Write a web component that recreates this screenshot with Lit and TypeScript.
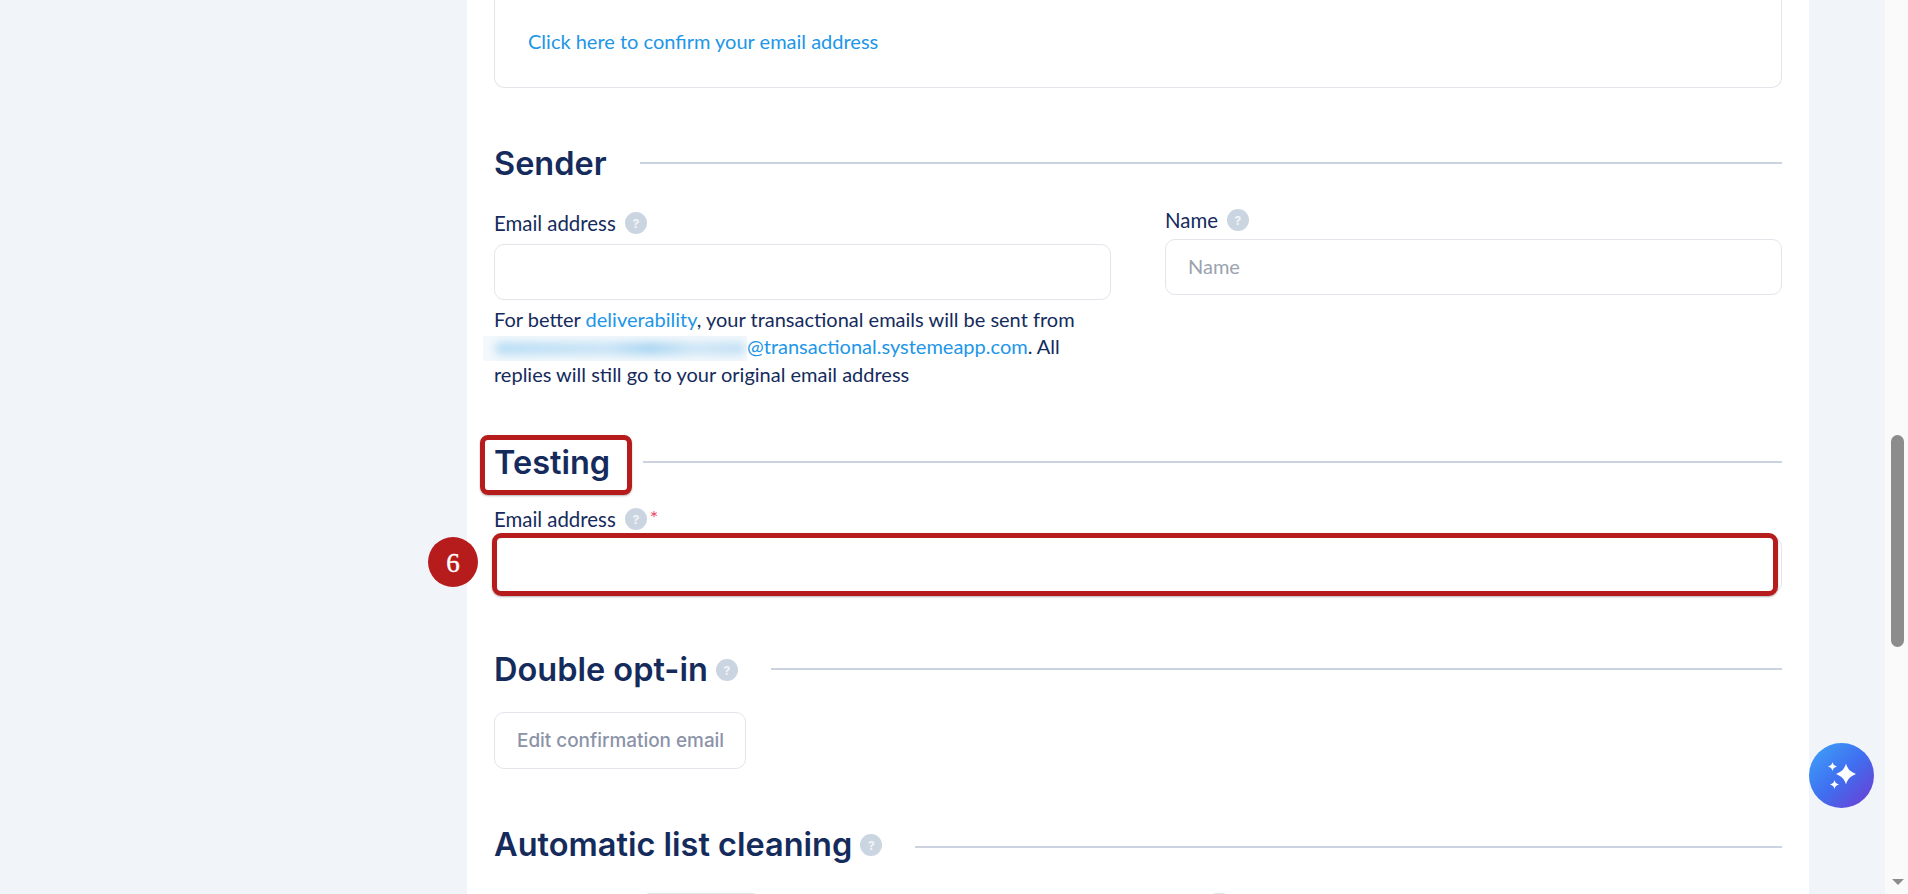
import { LitElement, html, css } from "lit";
import { customElement, property } from "lit/decorators.js";

@customElement("help-dot")
export class HelpDot extends LitElement {
  static styles = css`
    :host {
      display: inline-flex;
      align-items: center;
      justify-content: center;
      width: 22px;
      height: 22px;
      flex: none;
      border-radius: 50%;
      background: #cbd5e1;
      color: #f1f5f9;
      font: 700 12px "Inter", sans-serif;
    }
  `;
  render() { return html`?`; }
}

@customElement("section-title")
export class SectionTitle extends LitElement {
  static styles = css`
    :host { display: flex; align-items: center; }
    h2 {
      margin: var(--title-nudge, 0) 0 calc(-1 * var(--title-nudge, 0px));
      font: 600 32.5px/40px "Inter", sans-serif;
      color: #142b5c;
      white-space: nowrap;
    }
    help-dot { margin-left: 8px; }
    .rule {
      flex: 1;
      height: 2px;
      background: #cbd2e0;
      margin-left: 33px;
      margin-top: var(--rule-drop, 0);
    }
  `;
  @property() heading = "";
  @property({ type: Boolean }) help = false;

  render() {
    return html`
      <h2>${this.heading}</h2>
      ${this.help ? html`<help-dot></help-dot>` : ""}
      <div class="rule"></div>
    `;
  }
}

@customElement("app-root")
export class AppRoot extends LitElement {
  static styles = css`
    :host {
      display: block;
      height: 894px;
      overflow: hidden;
      position: relative;
      background: #f1f5f9;
      font-family: "Lato", "Noto Sans", sans-serif;
      color: #142b5c;
    }
    .page { display: flex; height: 894px; }
    .side { width: 467px; flex: none; }
    .main {
      width: 1342px;
      flex: none;
      box-sizing: border-box;
      background: #fff;
      padding: 0 27px;
      overflow: hidden;
    }
    .gutter { flex: 1; }

    .preview {
      height: 88px;
      box-sizing: border-box;
      border: 1px solid #e2e5ea;
      border-top: none;
      border-radius: 0 0 10px 10px;
      padding: 28px 33px 0;
      font-size: 20px;
      line-height: 27px;
    }
    a { color: #2196e8; text-decoration: none; }

    section-title.sender { margin-top: 55px; --title-nudge: 1px; }
    .cols { display: grid; grid-template-columns: 617px 617px; gap: 54px; margin-top: 27px; }
    .label { display: flex; align-items: center; gap: 9px; font-size: 20.4px; line-height: 26px; height: 26px; }
    .label.name { margin-top: -3px; margin-bottom: 6px; }
    .label .star { color: #f0476c; font-size: 20px; margin-left: -6px; margin-top: -4px; }
    .input {
      box-sizing: border-box;
      height: 56px;
      border: 1px solid #e2e5ea;
      border-radius: 10px;
      background: #fff;
      display: flex;
      align-items: center;
      padding: 0 22px 2px;
      font-size: 20px;
      color: #9aa3af;
      margin-top: 8px;
    }
    .label.name + .input { margin-top: 0; }
    .testing-field .input { margin-top: 5px; }
    .hint { margin: 6px 0 0; font-size: 20px; line-height: 27px; color: #142b5c; white-space: nowrap; }
    .blur {
      display: inline-block;
      width: 264px;
      height: 25px;
      margin-left: -11px;
      vertical-align: -7px;
      background: #f3f8fc;
      overflow: hidden;
    }
    .blur span {
      display: block;
      margin: 6px 0 0 12px;
      width: 250px;
      height: 13px;
      border-radius: 6px;
      background: linear-gradient(90deg, #b8ddf4 0%, #c8e3f6 45%, #a9d5f1 62%, #cfe6f6 80%, #c0dff4 100%);
      filter: blur(4px);
    }

    section-title.testing { margin-top: 54px; --title-nudge: 1px; }
    .testing-field { margin-top: 24px; }
    section-title.double { margin-top: 57px; --rule-drop: -2px; }
    .btn {
      display: inline-flex;
      align-items: center;
      box-sizing: border-box;
      height: 57px;
      padding: 0 21px 0 22px;
      margin-top: 22px;
      border: 1px solid #e2e5ea;
      border-radius: 10px;
      background: #fff;
      font: 500 18.9px "Inter", sans-serif;
      color: #8b93a8;
    }
    section-title.clean { margin-top: 56px; --rule-drop: 4px; }
    .cutoff { position: relative; height: 40px; margin-top: 28px; }
    .stub {
      position: absolute;
      top: 0;
      height: 40px;
      box-sizing: border-box;
      border: 1px solid #dfe3e6;
      border-radius: 10px;
    }

    .scrollbar {
      width: 23px;
      flex: none;
      background: #fafafa;
      display: flex;
      flex-direction: column;
      align-items: center;
      padding-left: 2px;
      box-sizing: border-box;
    }
    .thumb { width: 13px; height: 212px; margin-top: 435px; border-radius: 7px; background: #8c8c8c; }
    .arrow {
      margin-top: auto;
      margin-bottom: 9px;
      width: 0;
      height: 0;
      border-left: 6px solid transparent;
      border-right: 6px solid transparent;
      border-top: 6px solid #8c8c8c;
    }

    .ai {
      position: absolute;
      left: 1809px;
      top: 743px;
      width: 65px;
      height: 65px;
      border-radius: 50%;
      background: linear-gradient(135deg, #3f9ff8 5%, #3f6ff0 50%, #6b3fd4 95%);
      display: flex;
      align-items: center;
      justify-content: center;
    }

    .mark {
      position: absolute;
      box-sizing: border-box;
      border: 5px solid #b71c1c;
      border-radius: 8px;
      box-shadow: 0 1px 2px rgba(0, 0, 0, 0.3);
    }
    .mark.title { left: 480px; top: 435px; width: 152px; height: 60px; }
    .mark.field { left: 492px; top: 533px; width: 1286px; height: 63px; border-radius: 9px; }
    .badge {
      position: absolute;
      left: 428px;
      top: 537px;
      width: 50px;
      height: 50px;
      box-sizing: border-box;
      padding-top: 2px;
      border-radius: 50%;
      background: #b71c1c;
      color: #fff;
      display: flex;
      align-items: center;
      justify-content: center;
      font: 400 27px "Liberation Serif", serif;
      -webkit-text-stroke: 0.4px #fff;
    }
  `;

  render() {
    return html`
      <div class="page">
        <div class="side"></div>
        <main class="main">
          <div class="preview"><a>Click here to confirm your email address</a></div>

          <section-title class="sender" heading="Sender"></section-title>
          <div class="cols">
            <div>
              <div class="label">Email address <help-dot></help-dot></div>
              <div class="input"></div>
              <p class="hint">
                For better <a>deliverability</a>, your transactional emails will be sent from<br />
                <span class="blur"><span></span></span><a>@transactional.systemeapp.com</a>. All<br />
                replies will still go to your original email address
              </p>
            </div>
            <div>
              <div class="label name">Name <help-dot></help-dot></div>
              <div class="input">Name</div>
            </div>
          </div>

          <section-title class="testing" heading="Testing"></section-title>
          <div class="testing-field">
            <div class="label">Email address <help-dot></help-dot><span class="star">*</span></div>
            <div class="input"></div>
          </div>

          <section-title class="double" heading="Double opt-in" help></section-title>
          <div class="btn">Edit confirmation email</div>

          <section-title class="clean" heading="Automatic list cleaning" help></section-title>
          <div class="cutoff">
            <div class="stub" style="left:146px;width:122px"></div>
            <div class="stub" style="left:713px;width:25px"></div>
          </div>
        </main>
        <div class="gutter"></div>
        <div class="scrollbar">
          <div class="thumb"></div>
          <div class="arrow"></div>
        </div>
      </div>

      <div class="ai">
        <svg width="34" height="34" viewBox="0 0 34 34" fill="#fff">
          <path d="M21 4.500c1.500 5.500 4 8 10 10.500-6 2.500-8.500 5-10 10.500-1.500-5.500-4-8-10-10.500 6-2.500 8.500-5 10-10.500z" />
          <path d="M7.500 3c.6 2.600 1.800 3.800 4.500 4.500-2.700.7-3.900 1.900-4.500 4.500-.6-2.600-1.800-3.800-4.500-4.500 2.700-.7 3.900-1.900 4.500-4.500z" />
          <path d="M9.500 21c.6 2.600 1.800 3.800 4.500 4.500-2.700.7-3.900 1.900-4.500 4.500-.6-2.600-1.800-3.800-4.500-4.500 2.700-.7 3.900-1.900 4.500-4.500z" />
        </svg>
      </div>

      <div class="mark title"></div>
      <div class="mark field"></div>
      <div class="badge">6</div>
    `;
  }
}

declare global {
  interface HTMLElementTagNameMap {
    "app-root": AppRoot;
    "help-dot": HelpDot;
    "section-title": SectionTitle;
  }
}
